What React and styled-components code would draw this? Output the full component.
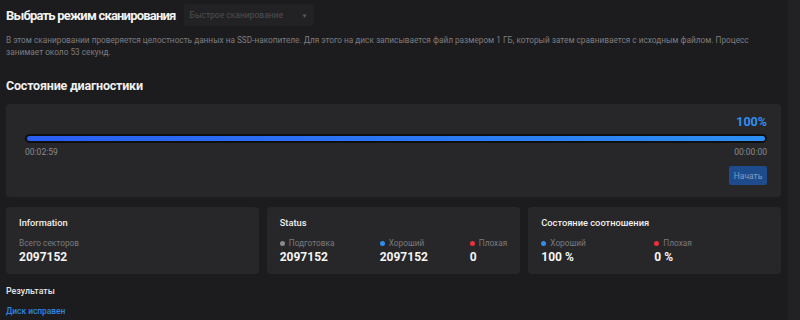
import React from "react";
import styled, { createGlobalStyle } from "styled-components";

const GlobalStyle = createGlobalStyle`
  html, body {
    margin: 0;
    padding: 0;
    background: #1c1c1e;
    font-family: Roboto, "Noto Sans", sans-serif;
  }
`;

const Page = styled.div`
  display: flex;
  width: 800px;
  height: 320px;
  overflow: hidden;
  background: #1c1c1e;
`;

const Main = styled.div`
  flex: 1;
  padding: 4px 7px 0 6px;
  display: flex;
  flex-direction: column;
`;

const ScrollTrack = styled.div`
  width: 12px;
  background: #222224;
`;

const HeaderRow = styled.div`
  display: flex;
  align-items: center;
  height: 22px;
`;

const Title = styled.h1`
  margin: 0;
  font-size: 13px;
  font-weight: 700;
  letter-spacing: -0.8px;
  color: #f2f2f2;
`;

const Select = styled.div`
  margin-left: 8px;
  width: 130px;
  height: 22px;
  box-sizing: border-box;
  padding: 0 6px;
  display: flex;
  align-items: center;
  justify-content: space-between;
  background: #222224;
  border-radius: 3px;
  font-size: 8.5px;
  color: #4e4e52;
`;

const Caret = styled.span`
  font-size: 6px;
  color: #5a5a5e;
`;

const Description = styled.p`
  margin: 8px 0 0;
  font-size: 8.25px;
  line-height: 12px;
  color: #7d7d80;
  max-width: 760px;
`;

const SectionTitle = styled.h2`
  margin: 20px 0 0;
  font-size: 12.5px;
  font-weight: 700;
  letter-spacing: -0.2px;
  color: #f0f0f0;
  line-height: 16px;
`;

const Panel = styled.div`
  margin-top: 10px;
  height: 93px;
  box-sizing: border-box;
  padding: 11px 14px 0 19px;
  background: #272729;
  border-radius: 4px;
  display: flex;
  flex-direction: column;
`;

const Percent = styled.div`
  align-self: flex-end;
  font-size: 12.5px;
  font-weight: 700;
  color: #2f8ff0;
  line-height: 14px;
`;

const Track = styled.div`
  margin-top: 5px;
  height: 9px;
  border-radius: 5px;
  background: #0f0f11;
  padding: 2px;
  box-sizing: border-box;
`;

const Fill = styled.div`
  height: 100%;
  border-radius: 3px;
  background: linear-gradient(90deg, #2a5ef2, #2c8ff2);
`;

const Times = styled.div`
  margin-top: 4px;
  display: flex;
  justify-content: space-between;
  font-size: 8.5px;
  color: #8a8a8d;
  line-height: 11px;
`;

const ButtonRow = styled.div`
  margin-top: 8px;
  display: flex;
  justify-content: flex-end;
`;

const StartButton = styled.button`
  width: 38px;
  height: 19px;
  border: none;
  border-radius: 2px;
  background: #1e4b8c;
  color: #7f9ec8;
  font-family: inherit;
  font-size: 8.5px;
  padding: 0;
`;

const Cards = styled.div`
  margin-top: 10px;
  display: grid;
  grid-template-columns: repeat(3, 1fr);
  gap: 8px;
`;

const Card = styled.div`
  height: 67px;
  box-sizing: border-box;
  padding: 9px 13px 0;
  background: #272729;
  border-radius: 4px;
`;

const CardTitle = styled.div`
  font-size: 9.3px;
  font-weight: 500;
  color: #f0f0f0;
  line-height: 13px;
`;

const Stats = styled.div`
  margin-top: 9px;
  display: grid;
  grid-template-columns: ${(p) => p.$cols};
`;

const Stat = styled.div`
  display: flex;
  flex-direction: column;
`;

const Label = styled.div`
  display: flex;
  align-items: center;
  gap: 4px;
  font-size: 8.3px;
  color: #7a7a7d;
  line-height: 10px;
`;

const Dot = styled.span`
  width: 5px;
  height: 5px;
  border-radius: 50%;
  background: ${(p) => p.$color};
`;

const Value = styled.div`
  margin-top: 2px;
  font-size: 12px;
  font-weight: 700;
  color: #f4f4f4;
  line-height: 15px;
`;

const Results = styled.div`
  margin-top: 11px;
`;

const ResultsTitle = styled.div`
  font-size: 8.8px;
  font-weight: 500;
  color: #e6e6e6;
  line-height: 12px;
`;

const ResultText = styled.div`
  margin-top: 8px;
  font-size: 8.4px;
  font-weight: 500;
  color: #2f86e0;
  line-height: 12px;
`;

const App = () => (
  <>
    <GlobalStyle />
    <Page>
      <Main>
        <HeaderRow>
          <Title>Выбрать режим сканирования</Title>
          <Select>
            Быстрое сканирование
            <Caret>▼</Caret>
          </Select>
        </HeaderRow>
        <Description>
          В этом сканировании проверяется целостность данных на SSD-накопителе. Для этого на диск записывается файл
          размером 1 ГБ, который затем сравнивается с исходным файлом. Процесс занимает около 53 секунд.
        </Description>

        <SectionTitle>Состояние диагностики</SectionTitle>
        <Panel>
          <Percent>100%</Percent>
          <Track>
            <Fill style={{ width: "100%" }} />
          </Track>
          <Times>
            <span>00:02:59</span>
            <span>00:00:00</span>
          </Times>
          <ButtonRow>
            <StartButton>Начать</StartButton>
          </ButtonRow>
        </Panel>

        <Cards>
          <Card>
            <CardTitle>Information</CardTitle>
            <Stats $cols="1fr">
              <Stat>
                <Label>Всего секторов</Label>
                <Value>2097152</Value>
              </Stat>
            </Stats>
          </Card>
          <Card>
            <CardTitle>Status</CardTitle>
            <Stats $cols="100px 90px 1fr">
              <Stat>
                <Label>
                  <Dot $color="#8a8a8d" />
                  Подготовка
                </Label>
                <Value>2097152</Value>
              </Stat>
              <Stat>
                <Label>
                  <Dot $color="#2f8ff0" />
                  Хороший
                </Label>
                <Value>2097152</Value>
              </Stat>
              <Stat>
                <Label>
                  <Dot $color="#e8323c" />
                  Плохая
                </Label>
                <Value>0</Value>
              </Stat>
            </Stats>
          </Card>
          <Card>
            <CardTitle>Состояние соотношения</CardTitle>
            <Stats $cols="113px 1fr">
              <Stat>
                <Label>
                  <Dot $color="#2f8ff0" />
                  Хороший
                </Label>
                <Value>100 %</Value>
              </Stat>
              <Stat>
                <Label>
                  <Dot $color="#e8323c" />
                  Плохая
                </Label>
                <Value>0 %</Value>
              </Stat>
            </Stats>
          </Card>
        </Cards>

        <Results>
          <ResultsTitle>Результаты</ResultsTitle>
          <ResultText>Диск исправен</ResultText>
        </Results>
      </Main>
      <ScrollTrack />
    </Page>
  </>
);

export default App;
